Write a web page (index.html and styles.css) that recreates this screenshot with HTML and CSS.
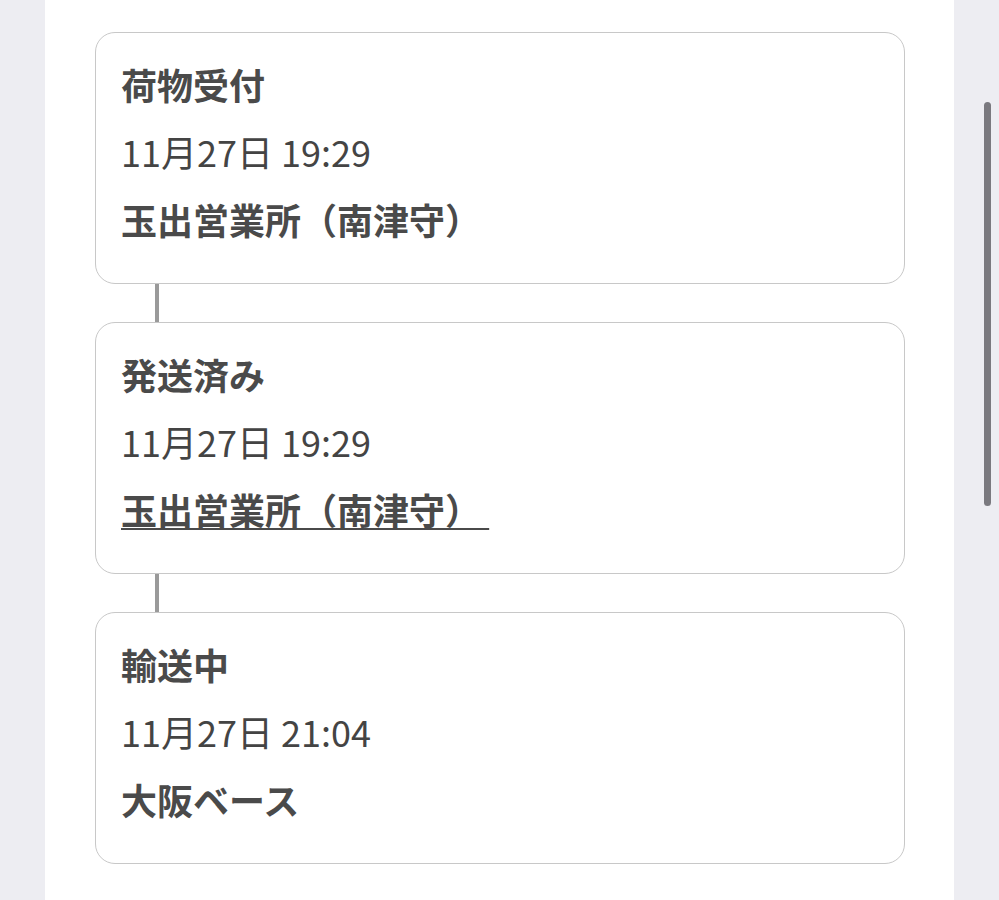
FILE: index.html
```html
<!DOCTYPE html>
<html lang="ja">
<head>
  <meta charset="UTF-8" />
  <meta name="viewport" content="width=device-width,initial-scale=1.0"/>
  <title>配送状況</title>
  <link rel="stylesheet" href="styles.css">
</head>
<body>
  <div class="page">
    <div class="timeline">
      <div class="step">
        <div class="step-title">荷物受付</div>
        <div class="step-time">11月27日 19:29</div>
        <div class="step-place">玉出営業所（南津守）</div>
      </div>
      <div class="link"></div>
      <div class="step">
        <div class="step-title">発送済み</div>
        <div class="step-time">11月27日 19:29</div>
        <div class="step-place"><a href="#">玉出営業所（南津守）&nbsp;</a></div>
      </div>
      <div class="link"></div>
      <div class="step">
        <div class="step-title">輸送中</div>
        <div class="step-time">11月27日 21:04</div>
        <div class="step-place">大阪ベース</div>
      </div>
    </div>
  </div>
  <div class="scroll-thumb"></div>
</body>
</html>
```

FILE: styles.css
```css
body {
  margin: 0;
  background: #ededf2;
  font-family: "Noto Sans CJK JP", "Noto Sans", sans-serif;
  color: #4a4a4a;
}
.page {
  margin: 0 45px;
  min-height: 900px;
  background: #fff;
  padding: 32px 49px 0 50px;
  box-sizing: border-box;
}
.step {
  border: 1px solid #c8c8c8;
  border-radius: 20px;
  padding: 19px 25px 0;
  height: 252px;
  box-sizing: border-box;
  font-size: 36px;
  line-height: 68px;
}
.step-title {
  line-height: 64px;
  margin-bottom: 1px;
}
.step-time {
  color: #444;
}
.step-title,
.step-place {
  font-weight: 700;
}
.step-place a {
  color: inherit;
  text-decoration: underline;
  text-decoration-thickness: 2px;
  text-underline-offset: 3px;
}
.link {
  width: 4px;
  height: 38px;
  margin-left: 60px;
  background: #9a9a9a;
}
.scroll-thumb {
  position: absolute;
  top: 102px;
  left: 984px;
  width: 7px;
  height: 404px;
  border-radius: 4px;
  background: #7a797f;
}
```
